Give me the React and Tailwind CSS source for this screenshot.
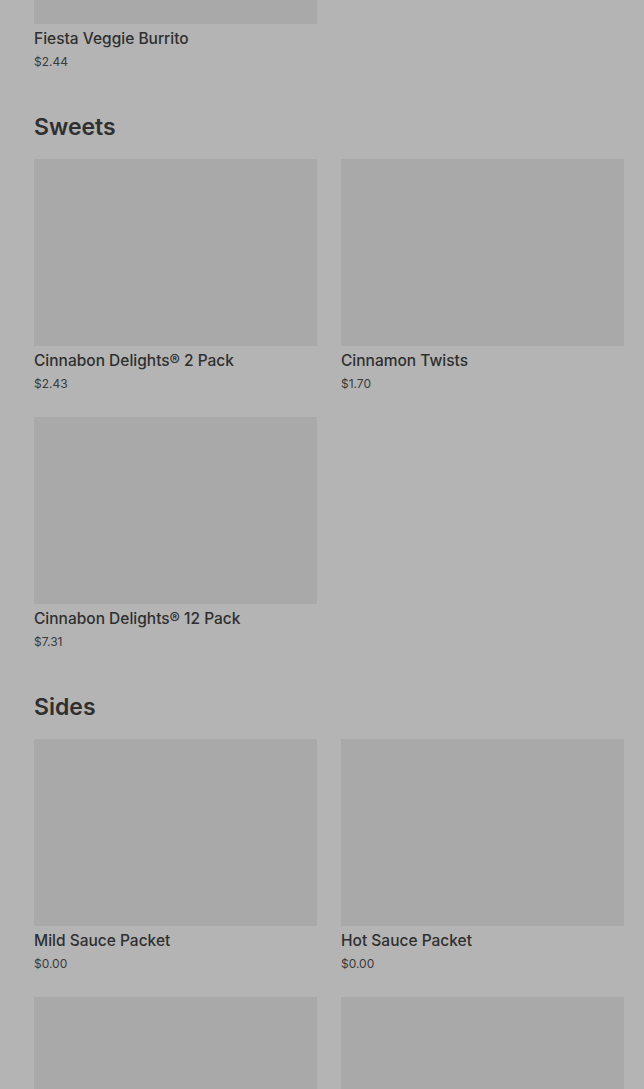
import React from "react";

const sections = [
  { title: null, items: [{ name: "Fiesta Veggie Burrito", price: "$2.44" }] },
  {
    title: "Sweets",
    items: [
      { name: "Cinnabon Delights® 2 Pack", price: "$2.43" },
      { name: "Cinnamon Twists", price: "$1.70" },
      { name: "Cinnabon Delights® 12 Pack", price: "$7.31" },
    ],
  },
  {
    title: "Sides",
    items: [
      { name: "Mild Sauce Packet", price: "$0.00" },
      { name: "Hot Sauce Packet", price: "$0.00" },
      { name: null, price: null },
      { name: null, price: null },
    ],
  },
];

function Item({ name, price }) {
  return (
    <div className="flex flex-col">
      <div className="h-[187px] bg-[#a9a9a9]" />
      {name && (
        <>
          <div className="mt-[3px] text-[15.5px] leading-6 font-medium text-[#2f2f2f]">{name}</div>
          <div className="mt-[1px] text-[12px] leading-5 text-[#3a3a3a]">{price}</div>
        </>
      )}
    </div>
  );
}

export default function App() {
  return (
    <div
      className="h-[1089px] bg-[#b4b4b4] overflow-hidden"
      style={{ fontFamily: "Inter, 'Noto Sans', sans-serif" }}
    >
      <div className="pl-[34px] pr-[20px] -mt-[163px] flex flex-col gap-[39px]">
        {sections.map((s, i) => (
          <section key={i} className="flex flex-col">
            {s.title && (
              <h2 className="text-[23px] leading-8 font-semibold text-[#2f2f2f] mb-[16px]">
                {s.title}
              </h2>
            )}
            <div className="grid grid-cols-2 gap-x-6 gap-y-[23px]">
              {s.items.map((it, j) => (
                <Item key={j} {...it} />
              ))}
            </div>
          </section>
        ))}
      </div>
    </div>
  );
}
